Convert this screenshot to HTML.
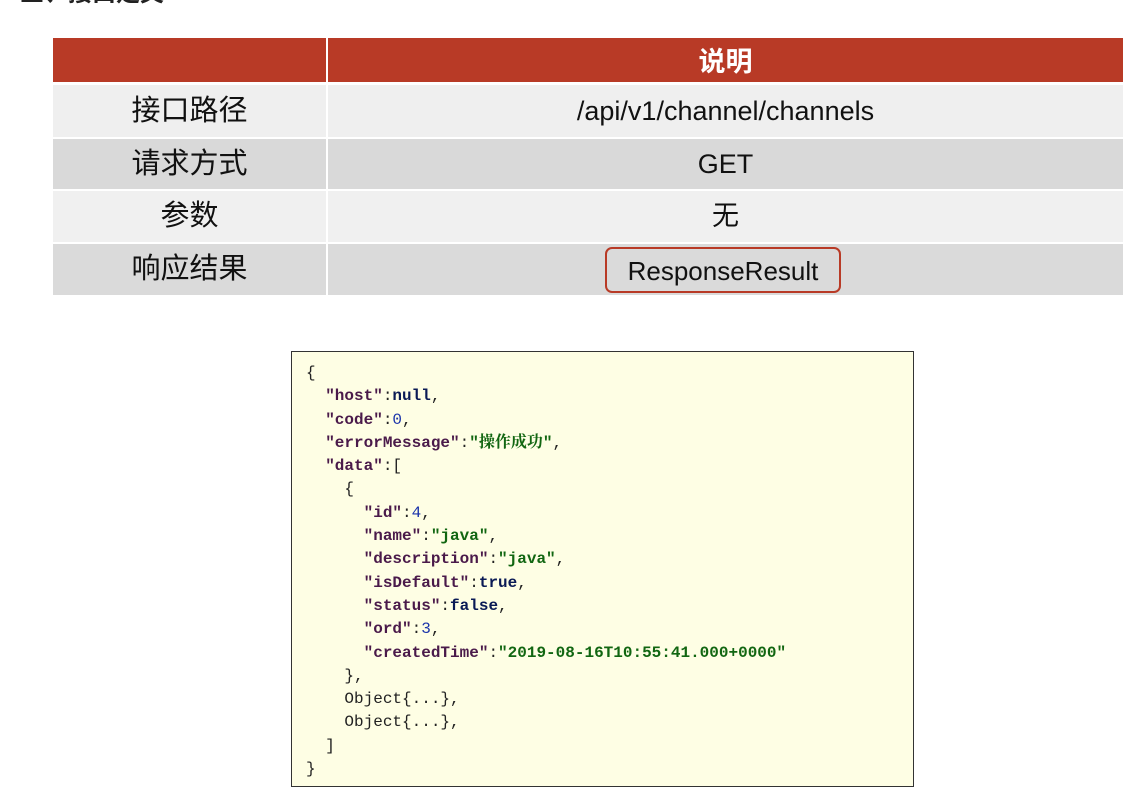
<!DOCTYPE html>
<html><head><meta charset="utf-8"><style>
body{margin:0;width:1140px;height:787px;background:#fff;position:relative;overflow:hidden;font-family:"Liberation Sans","Noto Sans CJK SC",sans-serif}
.t{position:absolute;left:53px;width:1070px}
.r{position:absolute;left:0;width:1070px;display:flex}
.c1{width:273px;text-align:center;font-size:29px;color:#111}
.c2{flex:1;margin-left:2px;text-align:center;font-size:27px;color:#111}
pre{position:absolute;left:291px;top:351px;width:623px;height:436px;margin:0;border:1px solid #333;background:#fefee4;font-family:"Liberation Mono","Noto Serif CJK SC",monospace;font-size:16px;line-height:23.3px;padding:10px 0 0 14px;box-sizing:border-box;color:#222}
.k{color:#4a1a4a;font-weight:bold}.s{color:#116611;font-weight:bold}.n{color:#1a33aa}.b{color:#0a1a55;font-weight:bold}
</style></head><body>
<div style="position:absolute;left:20px;top:-27px;font-size:24px;color:#222;font-weight:bold">三、接口定义</div>
<div class="t" style="top:38px">
<div class="r" style="top:0;height:44px"><div class="c1" style="background:#b83a26"></div><div class="c2" style="background:#b83a26;color:#fff;font-weight:bold;line-height:48px;font-size:27px">说明</div></div>
<div class="r" style="top:47px;height:52px;line-height:52px"><div class="c1" style="background:#efefef">接口路径</div><div class="c2" style="background:#efefef">/api/v1/channel/channels</div></div>
<div class="r" style="top:101px;height:50px;line-height:50px"><div class="c1" style="background:#d9d9d9">请求方式</div><div class="c2" style="background:#d9d9d9">GET</div></div>
<div class="r" style="top:153px;height:51px;line-height:51px"><div class="c1" style="background:#f0f0f0">参数</div><div class="c2" style="background:#f0f0f0">无</div></div>
<div class="r" style="top:206px;height:51px;line-height:51px"><div class="c1" style="background:#dadada">响应结果</div><div class="c2" style="background:#dadada"></div></div>
</div>
<div style="position:absolute;left:605px;top:247px;width:232px;height:42px;border:2px solid #b83a26;border-radius:7px;font-size:26px;line-height:44px;text-align:center;color:#111">ResponseResult</div>
<pre>{
  <span class="k">"host"</span>:<span class="b">null</span>,
  <span class="k">"code"</span>:<span class="n">0</span>,
  <span class="k">"errorMessage"</span>:<span class="s">"操作成功"</span>,
  <span class="k">"data"</span>:[
    {
      <span class="k">"id"</span>:<span class="n">4</span>,
      <span class="k">"name"</span>:<span class="s">"java"</span>,
      <span class="k">"description"</span>:<span class="s">"java"</span>,
      <span class="k">"isDefault"</span>:<span class="b">true</span>,
      <span class="k">"status"</span>:<span class="b">false</span>,
      <span class="k">"ord"</span>:<span class="n">3</span>,
      <span class="k">"createdTime"</span>:<span class="s">"2019-08-16T10:55:41.000+0000"</span>
    },
    Object{...},
    Object{...},
  ]
}</pre>
</body></html>
